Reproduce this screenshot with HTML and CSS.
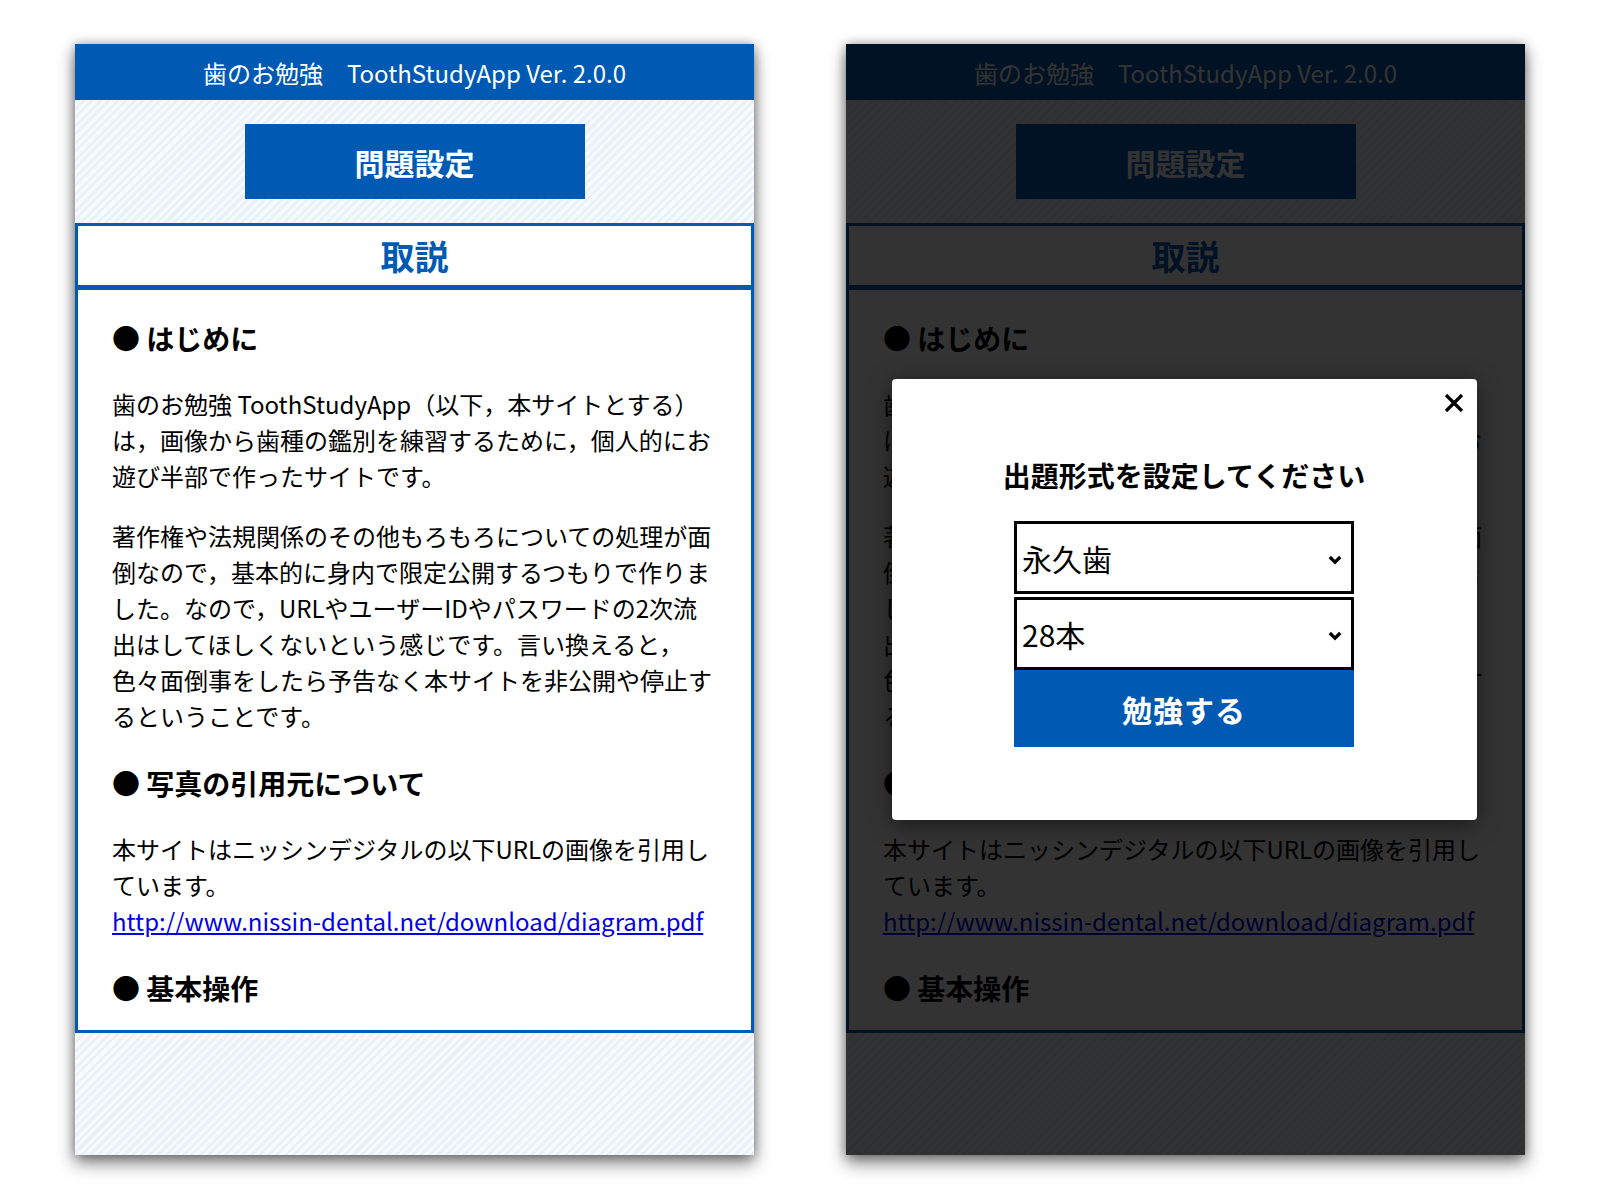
FILE: index.html
```html
<!DOCTYPE html>
<html lang="ja">
<head>
<meta charset="utf-8">
<title>ToothStudyApp</title>
<link rel="stylesheet" href="styles.css">
</head>
<body>
<div class="stage">
  <div class="phone">
    <header class="app-header">歯のお勉強　ToothStudyApp Ver. 2.0.0</header>
    <div class="app-body">
      <div class="settings-bar"><button class="settings-btn">問題設定</button></div>
      <section class="manual">
        <h1 class="manual-title">取説</h1>
        <div class="manual-content">
          <h2>● はじめに</h2>
          <p>歯のお勉強 ToothStudyApp（以下，本サイトとする）<br>は，画像から歯種の鑑別を練習するために，個人的にお<br>遊び半部で作ったサイトです。</p>
          <p>著作権や法規関係のその他もろもろについての処理が面<br>倒なので，基本的に身内で限定公開するつもりで作りま<br>した。なので，URLやユーザーIDやパスワードの2次流<br>出はしてほしくないという感じです。言い換えると，<br>色々面倒事をしたら予告なく本サイトを非公開や停止す<br>るということです。</p>
          <h2>● 写真の引用元について</h2>
          <p>本サイトはニッシンデジタルの以下URLの画像を引用し<br>ています。<br><a href="#">http://www.nissin-dental.net/download/diagram.pdf</a></p>
          <h2>● 基本操作</h2>
        </div>
      </section>
    </div>
  </div>

  <div class="phone">
    <header class="app-header">歯のお勉強　ToothStudyApp Ver. 2.0.0</header>
    <div class="app-body">
      <div class="settings-bar"><button class="settings-btn">問題設定</button></div>
      <section class="manual">
        <h1 class="manual-title">取説</h1>
        <div class="manual-content">
          <h2>● はじめに</h2>
          <p>歯のお勉強 ToothStudyApp（以下，本サイトとする）<br>は，画像から歯種の鑑別を練習するために，個人的にお<br>遊び半部で作ったサイトです。</p>
          <p>著作権や法規関係のその他もろもろについての処理が面<br>倒なので，基本的に身内で限定公開するつもりで作りま<br>した。なので，URLやユーザーIDやパスワードの2次流<br>出はしてほしくないという感じです。言い換えると，<br>色々面倒事をしたら予告なく本サイトを非公開や停止す<br>るということです。</p>
          <h2>● 写真の引用元について</h2>
          <p>本サイトはニッシンデジタルの以下URLの画像を引用し<br>ています。<br><a href="#">http://www.nissin-dental.net/download/diagram.pdf</a></p>
          <h2>● 基本操作</h2>
        </div>
      </section>
    </div>
    <div class="overlay">
      <div class="modal">
        <button class="close-btn" aria-label="閉じる">
          <svg width="20" height="20" viewBox="0 0 20 20"><path d="M2 2 L18 18 M18 2 L2 18" stroke="#000" stroke-width="3.2" stroke-linecap="butt"/></svg>
        </button>
        <h3 class="modal-title">出題形式を設定してください</h3>
        <div class="select-wrap first">
          <select class="select"><option>永久歯</option></select>
          <svg class="chevron" width="14" height="10" viewBox="0 0 14 10"><path d="M1.8 2 L7 7.2 L12.2 2" fill="none" stroke="#000" stroke-width="3.2"/></svg>
        </div>
        <div class="select-wrap">
          <select class="select"><option>28本</option></select>
          <svg class="chevron" width="14" height="10" viewBox="0 0 14 10"><path d="M1.8 2 L7 7.2 L12.2 2" fill="none" stroke="#000" stroke-width="3.2"/></svg>
        </div>
        <button class="start-btn">勉強する</button>
      </div>
    </div>
  </div>
</div>
</body>
</html>
```

FILE: styles.css
```css
* { box-sizing: border-box; }

html, body {
  margin: 0;
  background: #fff;
}

body {
  font-family: "Noto Sans CJK JP", "Noto Sans", sans-serif;
  color: #000;
  min-height: 1200px;
}

.stage {
  display: flex;
  gap: 92px;
  padding: 44px 75px 0;
}

.phone {
  position: relative;
  width: 679px;
  height: 1111px;
  display: flex;
  flex-direction: column;
  overflow: hidden;
  box-shadow: 0 8px 16px rgba(0, 0, 0, 0.5), 0 0 10px rgba(0, 0, 0, 0.3);
}

.app-header {
  flex: 0 0 55px;
  background: #005ab4;
  color: #fff;
  font-size: 24px;
  line-height: 55px;
  padding-top: 1px;
  text-align: center;
  white-space: pre;
}

.app-body {
  flex: 1;
  background: repeating-linear-gradient(-45deg, #eaf1f9 0 3px, #f7fafd 3px 6px);
}

.settings-bar {
  display: flex;
  justify-content: center;
  padding: 24px 0 24px;
}

.settings-btn {
  width: 340px;
  height: 75px;
  border: 0;
  background: #005ab4;
  color: #fff;
  font-family: inherit;
  font-size: 30px;
  font-weight: 700;
  padding: 0;
}

.manual-title {
  margin: 0;
  height: 65px;
  border: 3px solid #005ab4;
  background: #fff;
  color: #005ab4;
  font-size: 34px;
  font-weight: 700;
  line-height: 59px;
  text-align: center;
}

.manual-content {
  height: 745px;
  border: 3px solid #005ab4;
  border-top-width: 2px;
  background: #fff;
  padding: 27px 34px 0;
  overflow: hidden;
}

.manual-content h2 {
  margin: 28px 0 27px;
  font-size: 28px;
  line-height: 42px;
  font-weight: 700;
}

.manual-content h2:first-child { margin-top: 0; }

.manual-content p {
  margin: 0 0 24px;
  font-size: 24px;
  line-height: 36px;
  white-space: nowrap;
}

.manual-content a {
  color: #0000ee;
  text-decoration: underline;
}

.overlay {
  position: absolute;
  inset: 0;
  background: rgba(0, 0, 0, 0.8);
  display: flex;
  align-items: center;
  justify-content: center;
  padding-right: 3px;
}

.modal {
  position: relative;
  width: 585px;
  height: 441px;
  background: #fff;
  border-radius: 4px;
  box-shadow: 0 4px 22px rgba(0, 0, 0, 0.5);
  display: flex;
  flex-direction: column;
  align-items: center;
  padding-top: 75px;
}

.close-btn {
  position: absolute;
  top: 14px;
  right: 13px;
  width: 20px;
  height: 20px;
  padding: 0;
  border: 0;
  background: none;
  display: block;
}

.close-btn svg { display: block; }

.modal-title {
  margin: 0 0 25px;
  font-size: 28px;
  line-height: 42px;
  font-weight: 700;
}

.select-wrap {
  position: relative;
  width: 340px;
  height: 73px;
  border: 3px solid #000;
}

.select-wrap.first { margin-bottom: 3px; }

.select {
  -webkit-appearance: none;
  appearance: none;
  width: 100%;
  height: 100%;
  border: 0;
  border-radius: 0;
  background: #fff;
  color: #000;
  font-family: inherit;
  font-size: 30px;
  padding: 0 0 0 5px;
  outline: none;
}

.chevron {
  position: absolute;
  right: 9px;
  top: 31px;
  pointer-events: none;
}

.start-btn {
  width: 340px;
  height: 77px;
  border: 0;
  background: #005ab4;
  color: #fff;
  font-family: inherit;
  font-size: 30px;
  font-weight: 700;
  letter-spacing: 1px;
  padding: 0;
}
```
